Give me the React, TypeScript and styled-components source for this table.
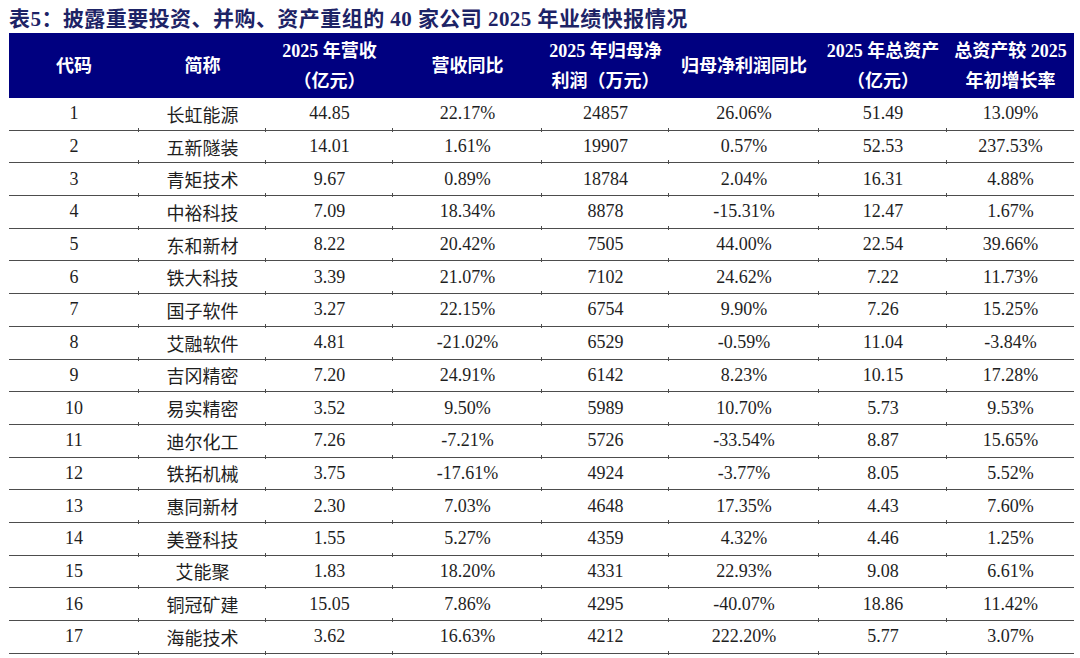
import styled, { createGlobalStyle } from "styled-components";

const GlobalStyle = createGlobalStyle`
  html, body {
    margin: 0;
    padding: 0;
    background: #ffffff;
  }
`;

const FONT = `"Liberation Serif", "Noto Sans CJK SC", serif`;
const COLUMNS = "130px 127px 127px 149px 127px 150px 128px 127px";

const Page = styled.div`
  width: 1080px;
  height: 658px;
  overflow: hidden;
  padding-left: 9px;
  box-sizing: border-box;
  font-family: ${FONT};
`;

const Title = styled.h1`
  margin: 0;
  height: 33px;
  display: flex;
  align-items: center;
  font-size: 21px;
  font-weight: 700;
  letter-spacing: 0.45px;
  color: #1d2366;
  white-space: nowrap;
`;

const Table = styled.div`
  width: 1065px;
  display: flex;
  flex-direction: column;
`;

const HeaderRow = styled.div`
  display: grid;
  grid-template-columns: ${COLUMNS};
  height: 65px;
  background: #000080;
`;

const HeaderCell = styled.div`
  display: flex;
  flex-direction: column;
  align-items: center;
  justify-content: center;
  color: #ffffff;
  font-size: 18px;
  font-weight: 700;
  line-height: 30px;
  white-space: nowrap;
`;

const Row = styled.div`
  display: grid;
  grid-template-columns: ${COLUMNS};
  height: 32.7px;
  box-sizing: border-box;
  border-bottom: 1px solid #4d4d4d;
`;

const Cell = styled.div<{ $tick?: boolean }>`
  position: relative;
  display: flex;
  align-items: center;
  justify-content: center;
  font-size: 18px;
  color: #1e1e1e;
  white-space: nowrap;

  &::after {
    content: "";
    display: ${(p) => (p.$tick ? "block" : "none")};
    position: absolute;
    right: 0;
    bottom: -2px;
    width: 1px;
    height: 4px;
    background: #4d4d4d;
  }
`;

const headers: string[][] = [
  ["代码"],
  ["简称"],
  ["2025 年营收", "（亿元）"],
  ["营收同比"],
  ["2025 年归母净", "利润（万元）"],
  ["归母净利润同比"],
  ["2025 年总资产", "（亿元）"],
  ["总资产较 2025", "年初增长率"],
];

const rows: string[][] = [
  ["1", "长虹能源", "44.85", "22.17%", "24857", "26.06%", "51.49", "13.09%"],
  ["2", "五新隧装", "14.01", "1.61%", "19907", "0.57%", "52.53", "237.53%"],
  ["3", "青矩技术", "9.67", "0.89%", "18784", "2.04%", "16.31", "4.88%"],
  ["4", "中裕科技", "7.09", "18.34%", "8878", "-15.31%", "12.47", "1.67%"],
  ["5", "东和新材", "8.22", "20.42%", "7505", "44.00%", "22.54", "39.66%"],
  ["6", "铁大科技", "3.39", "21.07%", "7102", "24.62%", "7.22", "11.73%"],
  ["7", "国子软件", "3.27", "22.15%", "6754", "9.90%", "7.26", "15.25%"],
  ["8", "艾融软件", "4.81", "-21.02%", "6529", "-0.59%", "11.04", "-3.84%"],
  ["9", "吉冈精密", "7.20", "24.91%", "6142", "8.23%", "10.15", "17.28%"],
  ["10", "易实精密", "3.52", "9.50%", "5989", "10.70%", "5.73", "9.53%"],
  ["11", "迪尔化工", "7.26", "-7.21%", "5726", "-33.54%", "8.87", "15.65%"],
  ["12", "铁拓机械", "3.75", "-17.61%", "4924", "-3.77%", "8.05", "5.52%"],
  ["13", "惠同新材", "2.30", "7.03%", "4648", "17.35%", "4.43", "7.60%"],
  ["14", "美登科技", "1.55", "5.27%", "4359", "4.32%", "4.46", "1.25%"],
  ["15", "艾能聚", "1.83", "18.20%", "4331", "22.93%", "9.08", "6.61%"],
  ["16", "铜冠矿建", "15.05", "7.86%", "4295", "-40.07%", "18.86", "11.42%"],
  ["17", "海能技术", "3.62", "16.63%", "4212", "222.20%", "5.77", "3.07%"],
];

const App = () => (
  <>
    <GlobalStyle />
    <Page>
      <Title>表5：披露重要投资、并购、资产重组的 40 家公司 2025 年业绩快报情况</Title>
      <Table>
        <HeaderRow>
          {headers.map((lines) => (
            <HeaderCell key={lines.join("")}>
              {lines.map((line) => (
                <span key={line}>{line}</span>
              ))}
            </HeaderCell>
          ))}
        </HeaderRow>
        {rows.map((row) => (
          <Row key={row[0]}>
            {row.map((value, i) => (
              <Cell key={i} $tick={i < row.length - 1}>
                {value}
              </Cell>
            ))}
          </Row>
        ))}
      </Table>
    </Page>
  </>
);

export default App;
